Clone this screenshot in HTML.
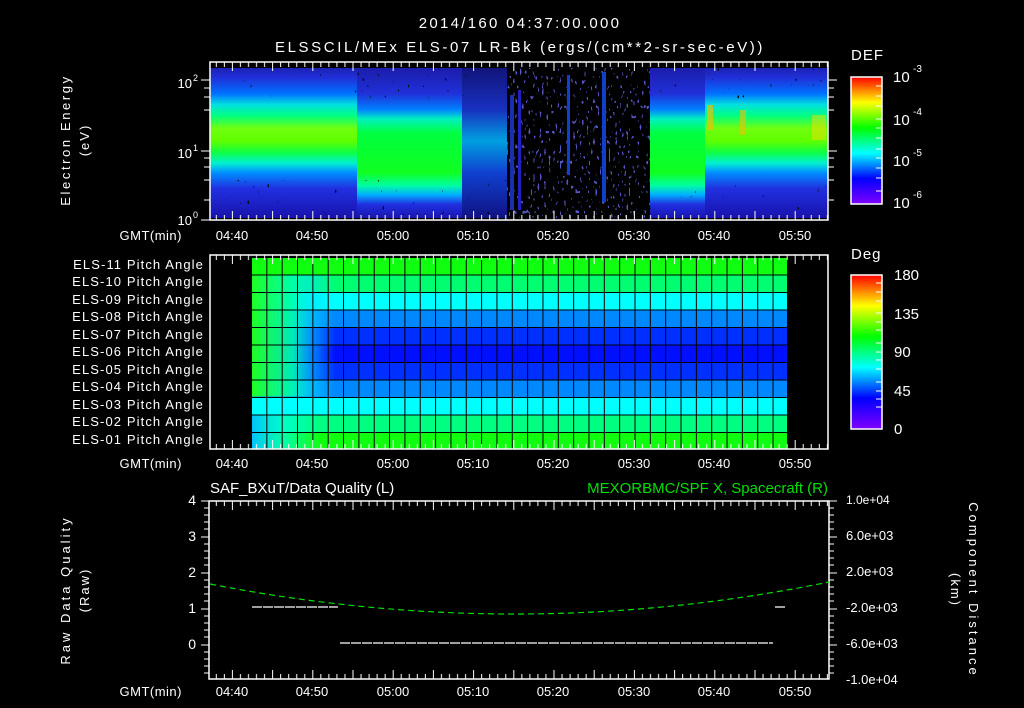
<!DOCTYPE html>
<html><head><meta charset="utf-8"><style>
html,body{margin:0;padding:0;background:#000;}
svg{display:block;font-family:"Liberation Sans",sans-serif;}
text{fill:#fff;font-size:13px;}
</style></head><body>
<svg width="1024" height="708" viewBox="0 0 1024 708" xmlns="http://www.w3.org/2000/svg">
<defs>
<linearGradient id="gA" gradientUnits="userSpaceOnUse" x1="0" y1="62" x2="0" y2="220">
<stop offset="0" stop-color="#1a18a0"/><stop offset="0.1" stop-color="#2030d8"/>
<stop offset="0.2" stop-color="#0070ff"/><stop offset="0.27" stop-color="#00e0e0"/>
<stop offset="0.34" stop-color="#00ff80"/><stop offset="0.42" stop-color="#70ff10"/>
<stop offset="0.5" stop-color="#60ff00"/><stop offset="0.57" stop-color="#10ff40"/>
<stop offset="0.64" stop-color="#00f0d0"/><stop offset="0.7" stop-color="#0090ff"/>
<stop offset="0.8" stop-color="#2030e0"/><stop offset="1" stop-color="#1810a8"/>
</linearGradient>
<linearGradient id="gB" gradientUnits="userSpaceOnUse" x1="0" y1="62" x2="0" y2="220">
<stop offset="0" stop-color="#1a18a0"/><stop offset="0.2" stop-color="#2030d8"/>
<stop offset="0.3" stop-color="#0080ff"/><stop offset="0.36" stop-color="#00f0c0"/>
<stop offset="0.45" stop-color="#00ff40"/><stop offset="0.7" stop-color="#10ff20"/>
<stop offset="0.78" stop-color="#00ffa0"/><stop offset="0.84" stop-color="#00b0ff"/>
<stop offset="0.9" stop-color="#2030e0"/><stop offset="1" stop-color="#1810a8"/>
</linearGradient>
<linearGradient id="gC" gradientUnits="userSpaceOnUse" x1="0" y1="62" x2="0" y2="220">
<stop offset="0" stop-color="#101070"/><stop offset="0.3" stop-color="#1830c0"/>
<stop offset="0.5" stop-color="#00a0e0"/><stop offset="0.7" stop-color="#1040d0"/>
<stop offset="1" stop-color="#101080"/>
</linearGradient>
<linearGradient id="gDef" x1="0" y1="1" x2="0" y2="0">
<stop offset="0" stop-color="#8000ff"/><stop offset="0.2" stop-color="#0000ff"/>
<stop offset="0.4" stop-color="#00ffff"/><stop offset="0.6" stop-color="#00ff00"/>
<stop offset="0.8" stop-color="#ffff00"/><stop offset="1" stop-color="#ff0000"/>
</linearGradient>
<linearGradient id="gL" gradientUnits="userSpaceOnUse" x1="251" y1="0" x2="335" y2="0">
<stop offset="0" stop-color="#20ff20" stop-opacity="1"/><stop offset="0.5" stop-color="#00ffb0" stop-opacity="0.9"/>
<stop offset="0.75" stop-color="#00e0ff" stop-opacity="0.5"/><stop offset="1" stop-color="#00e0ff" stop-opacity="0"/>
</linearGradient>
<linearGradient id="gL2" gradientUnits="userSpaceOnUse" x1="251" y1="0" x2="320" y2="0">
<stop offset="0" stop-color="#00c0ff" stop-opacity="1"/><stop offset="0.5" stop-color="#00ffe0" stop-opacity="0.7"/>
<stop offset="1" stop-color="#00ffe0" stop-opacity="0"/>
</linearGradient>
<pattern id="grid" patternUnits="userSpaceOnUse" x="251" y="257" width="15.34" height="17.5">
<path d="M0 0V17.5M0 0H15.34" stroke="#000" stroke-width="2" fill="none"/>
</pattern>
<pattern id="tk" patternUnits="userSpaceOnUse" x="231.9" y="0" width="40.2" height="40">
<path d="M0.5 0V9M8.54 0V5M16.58 0V5M24.62 0V5M32.66 0V5" stroke="#fff" stroke-width="1" fill="none"/>
</pattern>
<pattern id="tkb" patternUnits="userSpaceOnUse" x="231.9" y="0" width="40.2" height="40">
<path d="M0.5 20V11M8.54 20V15M16.58 20V15M24.62 20V15M32.66 20V15" stroke="#fff" stroke-width="1" fill="none"/>
</pattern>
<filter id="spk" x="0" y="0" width="1" height="1" filterUnits="objectBoundingBox">
<feTurbulence type="fractalNoise" baseFrequency="0.4 0.18" numOctaves="1" seed="5"/>
<feColorMatrix type="matrix" values="0 0 0 0 0  0 0 0 0 0  0 0 0 0 0  1 0 0 0 0"/>
<feComponentTransfer><feFuncA type="discrete" tableValues="0 0 0 0.85"/></feComponentTransfer>
</filter>
<filter id="spk2" x="0" y="0" width="1" height="1" filterUnits="objectBoundingBox">
<feTurbulence type="fractalNoise" baseFrequency="0.45 0.2" numOctaves="1" seed="9"/>
<feColorMatrix type="matrix" values="0 0 0 0 0.15  0 0 0 0 0.15  0 0 0 0 0.9  1 0 0 0 0"/>
<feComponentTransfer><feFuncA type="discrete" tableValues="0 0 0.8"/></feComponentTransfer>
</filter>
</defs>

<text x="520" y="28" text-anchor="middle" style="font-size:15px;letter-spacing:2.3px">2014/160 04:37:00.000</text>
<text x="520" y="52" text-anchor="middle" style="font-size:15px;letter-spacing:2.6px">ELSSCIL/MEx ELS-07 LR-Bk  (ergs/(cm**2-sr-sec-eV))</text>

<!-- Panel 1 spectrogram -->
<rect x="210" y="62" width="618" height="158" fill="#000"/>
<rect x="210" y="68" width="147" height="150" fill="url(#gA)"/>
<rect x="357" y="68" width="105" height="150" fill="url(#gB)"/>
<rect x="462" y="68" width="45" height="150" fill="url(#gC)"/>
<rect x="507" y="68" width="143" height="150" filter="url(#spk2)"/>
<rect x="510" y="95" width="4" height="115" fill="#1830b0"/>
<rect x="518" y="90" width="3" height="120" fill="#2020c0"/>
<rect x="567" y="75" width="3" height="100" fill="#1040d0"/>
<rect x="602" y="72" width="4" height="130" fill="#1040c8"/>
<rect x="650" y="68" width="55" height="150" fill="url(#gB)"/>
<rect x="705" y="68" width="123" height="150" fill="url(#gA)"/>
<rect x="707" y="105" width="6" height="25" fill="#f0c000" opacity="0.7"/>
<rect x="740" y="110" width="6" height="25" fill="#f0c000" opacity="0.6"/>
<rect x="812" y="115" width="14" height="25" fill="#f0e000" opacity="0.5"/>
<rect x="210" y="66" width="297" height="34" filter="url(#spk)"/>
<rect x="210" y="180" width="297" height="40" filter="url(#spk)"/>
<rect x="650" y="66" width="178" height="34" filter="url(#spk)"/>
<rect x="650" y="182" width="178" height="38" filter="url(#spk)"/>
<rect x="210" y="62" width="618" height="158" fill="none" stroke="#fff" stroke-width="1.5"/>
<g transform="translate(0,62)"><rect x="210" y="0" width="618" height="20" fill="url(#tk)"/></g>
<g transform="translate(0,200)"><rect x="210" y="0" width="618" height="20" fill="url(#tkb)"/></g>
<path d="M201 80H210M204 88H210M204 97H210M204 110H210M201 151H210M204 158H210M204 167H210M204 180H210M204 200H210M201 220H210M828 80H837M828 88H834M828 97H834M828 110H834M828 151H837M828 158H834M828 167H834M828 180H834M828 200H834" stroke="#fff" stroke-width="1"/>
<text x="192" y="88" text-anchor="end">10</text><text x="193" y="81" style="font-size:9px">2</text>
<text x="192" y="158" text-anchor="end">10</text><text x="193" y="151" style="font-size:9px">1</text>
<text x="192" y="225" text-anchor="end">10</text><text x="193" y="218" style="font-size:9px">0</text>
<text transform="translate(70,140) rotate(-90)" text-anchor="middle" style="letter-spacing:2.6px">Electron Energy</text>
<text transform="translate(89,140) rotate(-90)" text-anchor="middle" style="letter-spacing:2px">(eV)</text>
<text x="182" y="240" text-anchor="end" style="letter-spacing:0.5px">GMT(min)</text>
<g text-anchor="middle">
<text x="232" y="240">04:40</text><text x="312" y="240">04:50</text><text x="393" y="240">05:00</text><text x="473" y="240">05:10</text><text x="553" y="240">05:20</text><text x="634" y="240">05:30</text><text x="714" y="240">05:40</text><text x="795" y="240">05:50</text>
</g>
<rect x="851" y="77" width="31" height="127" fill="url(#gDef)" stroke="#fff" stroke-width="1.5"/>
<path d="M876 86H882M876 96H882M876 106H882M876 119H882M876 128H882M876 138H882M876 149H882M876 158H882M876 168H882M876 178H882M876 191H882" stroke="#fff"/>
<text x="851" y="60" style="font-size:15px;letter-spacing:1px">DEF</text>
<text x="893" y="82" style="font-size:15px">10</text><text x="913" y="72" style="font-size:10px">-3</text>
<text x="893" y="125" style="font-size:15px">10</text><text x="913" y="115" style="font-size:10px">-4</text>
<text x="893" y="166" style="font-size:15px">10</text><text x="913" y="156" style="font-size:10px">-5</text>
<text x="893" y="208" style="font-size:15px">10</text><text x="913" y="198" style="font-size:10px">-6</text>

<!-- Panel 2 pitch angle -->
<g>
<rect x="251" y="257" width="537" height="17.5" fill="#10ff10"/>
<rect x="251" y="274.5" width="537" height="17.5" fill="#00ff70"/>
<rect x="251" y="292" width="537" height="17.5" fill="#00ffff"/>
<rect x="251" y="309.5" width="537" height="17.5" fill="#0088ff"/>
<rect x="251" y="327" width="537" height="17.5" fill="#0030ff"/>
<rect x="251" y="344.5" width="537" height="17.5" fill="#0010ff"/>
<rect x="251" y="362" width="537" height="17.5" fill="#0030ff"/>
<rect x="251" y="379.5" width="537" height="17.5" fill="#0088ff"/>
<rect x="251" y="397" width="537" height="17.5" fill="#00ffff"/>
<rect x="251" y="414.5" width="537" height="17.5" fill="#00ff80"/>
<rect x="251" y="432" width="537" height="17.5" fill="#10ff10"/>
<rect x="251" y="274.5" width="90" height="122" fill="url(#gL)"/>
<rect x="251" y="414.5" width="70" height="35" fill="url(#gL2)"/>
<rect x="251" y="257" width="537" height="193" fill="url(#grid)"/>
<path d="M788 257V450" stroke="#000" stroke-width="2"/>
</g>
<rect x="210" y="255" width="618" height="194" fill="none" stroke="#fff" stroke-width="1.5"/>
<g transform="translate(0,255)"><rect x="210" y="0" width="618" height="20" fill="url(#tk)"/></g>
<g transform="translate(0,429)"><rect x="210" y="0" width="618" height="20" fill="url(#tkb)"/></g>
<g text-anchor="end" style="font-size:12px;letter-spacing:1.1px">
<text x="204" y="269">ELS-11 Pitch Angle</text><text x="204" y="286">ELS-10 Pitch Angle</text>
<text x="204" y="304">ELS-09 Pitch Angle</text><text x="204" y="321">ELS-08 Pitch Angle</text>
<text x="204" y="339">ELS-07 Pitch Angle</text><text x="204" y="356">ELS-06 Pitch Angle</text>
<text x="204" y="374">ELS-05 Pitch Angle</text><text x="204" y="391">ELS-04 Pitch Angle</text>
<text x="204" y="409">ELS-03 Pitch Angle</text><text x="204" y="426">ELS-02 Pitch Angle</text>
<text x="204" y="444">ELS-01 Pitch Angle</text>
</g>
<text x="182" y="468" text-anchor="end" style="letter-spacing:0.5px">GMT(min)</text>
<g text-anchor="middle">
<text x="232" y="468">04:40</text><text x="312" y="468">04:50</text><text x="393" y="468">05:00</text><text x="473" y="468">05:10</text><text x="553" y="468">05:20</text><text x="634" y="468">05:30</text><text x="714" y="468">05:40</text><text x="795" y="468">05:50</text>
</g>
<rect x="851" y="275" width="31" height="154" fill="url(#gDef)" stroke="#fff" stroke-width="1.5"/>
<path d="M876 283H882M876 292H882M876 301H882M876 313H882M876 322H882M876 330H882M876 343H882M876 352H882M876 360H882M876 369H882M876 382H882M876 391H882M876 399H882M876 407H882" stroke="#fff"/>
<text x="851" y="259" style="font-size:15px;letter-spacing:1px">Deg</text>
<text x="894" y="280" style="font-size:15px">180</text><text x="894" y="319" style="font-size:15px">135</text><text x="894" y="357" style="font-size:15px">90</text><text x="894" y="396" style="font-size:15px">45</text><text x="894" y="434" style="font-size:15px">0</text>

<!-- Panel 3 -->
<text x="210" y="493" style="font-size:15px">SAF_BXuT/Data Quality (L)</text>
<text x="828" y="493" text-anchor="end" style="font-size:15px;fill:#00e000">MEXORBMC/SPF X, Spacecraft (R)</text>
<rect x="209" y="501" width="620" height="178" fill="none" stroke="#fff" stroke-width="1.5"/>
<g transform="translate(0,501)"><rect x="209" y="0" width="620" height="20" fill="url(#tk)"/></g>
<g transform="translate(0,659)"><rect x="209" y="0" width="620" height="20" fill="url(#tkb)"/></g>
<path d="M201 501H209M204 508H209M204 515H209M204 522H209M204 529H209M201 537H209M204 544H209M204 551H209M204 558H209M204 565H209M201 573H209M204 580H209M204 587H209M204 594H209M204 601H209M201 609H209M204 616H209M204 623H209M204 630H209M204 637H209M201 645H209M204 652H209M204 659H209M204 666H209M204 673H209M829 501H837M829 508H834M829 515H834M829 522H834M829 529H834M829 537H837M829 544H834M829 551H834M829 558H834M829 565H834M829 573H837M829 580H834M829 587H834M829 594H834M829 601H834M829 609H837M829 616H834M829 623H834M829 630H834M829 637H834M829 645H837M829 652H834M829 659H834M829 666H834M829 673H834" stroke="#fff"/>
<g text-anchor="end"><text x="196" y="505" style="font-size:14px">4</text><text x="196" y="541" style="font-size:14px">3</text><text x="196" y="577" style="font-size:14px">2</text><text x="196" y="613" style="font-size:14px">1</text><text x="196" y="649" style="font-size:14px">0</text></g>
<g style="font-size:12px"><text x="846" y="504" style="font-size:12px">1.0e+04</text><text x="846" y="540">6.0e+03</text><text x="846" y="576">2.0e+03</text><text x="846" y="612">-2.0e+03</text><text x="846" y="648">-6.0e+03</text><text x="846" y="684">-1.0e+04</text></g>
<text transform="translate(70,590) rotate(-90)" text-anchor="middle" style="letter-spacing:3px">Raw Data Quality</text>
<text transform="translate(89,590) rotate(-90)" text-anchor="middle" style="letter-spacing:2px">(Raw)</text>
<text transform="translate(969,590) rotate(90)" text-anchor="middle" style="letter-spacing:3px">Component Distance</text>
<text transform="translate(951,590) rotate(90)" text-anchor="middle" style="letter-spacing:2px">(km)</text>
<path d="M210 584 Q520 645 829 582" stroke="#00e000" stroke-width="1.2" fill="none" stroke-dasharray="6 4"/>
<path d="M252 607H338M340 643H773M775 607H786" stroke="#fff" stroke-width="1.3" stroke-dasharray="10 1"/>
<text x="182" y="696" text-anchor="end" style="letter-spacing:0.5px">GMT(min)</text>
<g text-anchor="middle">
<text x="232" y="696">04:40</text><text x="312" y="696">04:50</text><text x="393" y="696">05:00</text><text x="473" y="696">05:10</text><text x="553" y="696">05:20</text><text x="634" y="696">05:30</text><text x="714" y="696">05:40</text><text x="795" y="696">05:50</text>
</g>
</svg>
</body></html>
